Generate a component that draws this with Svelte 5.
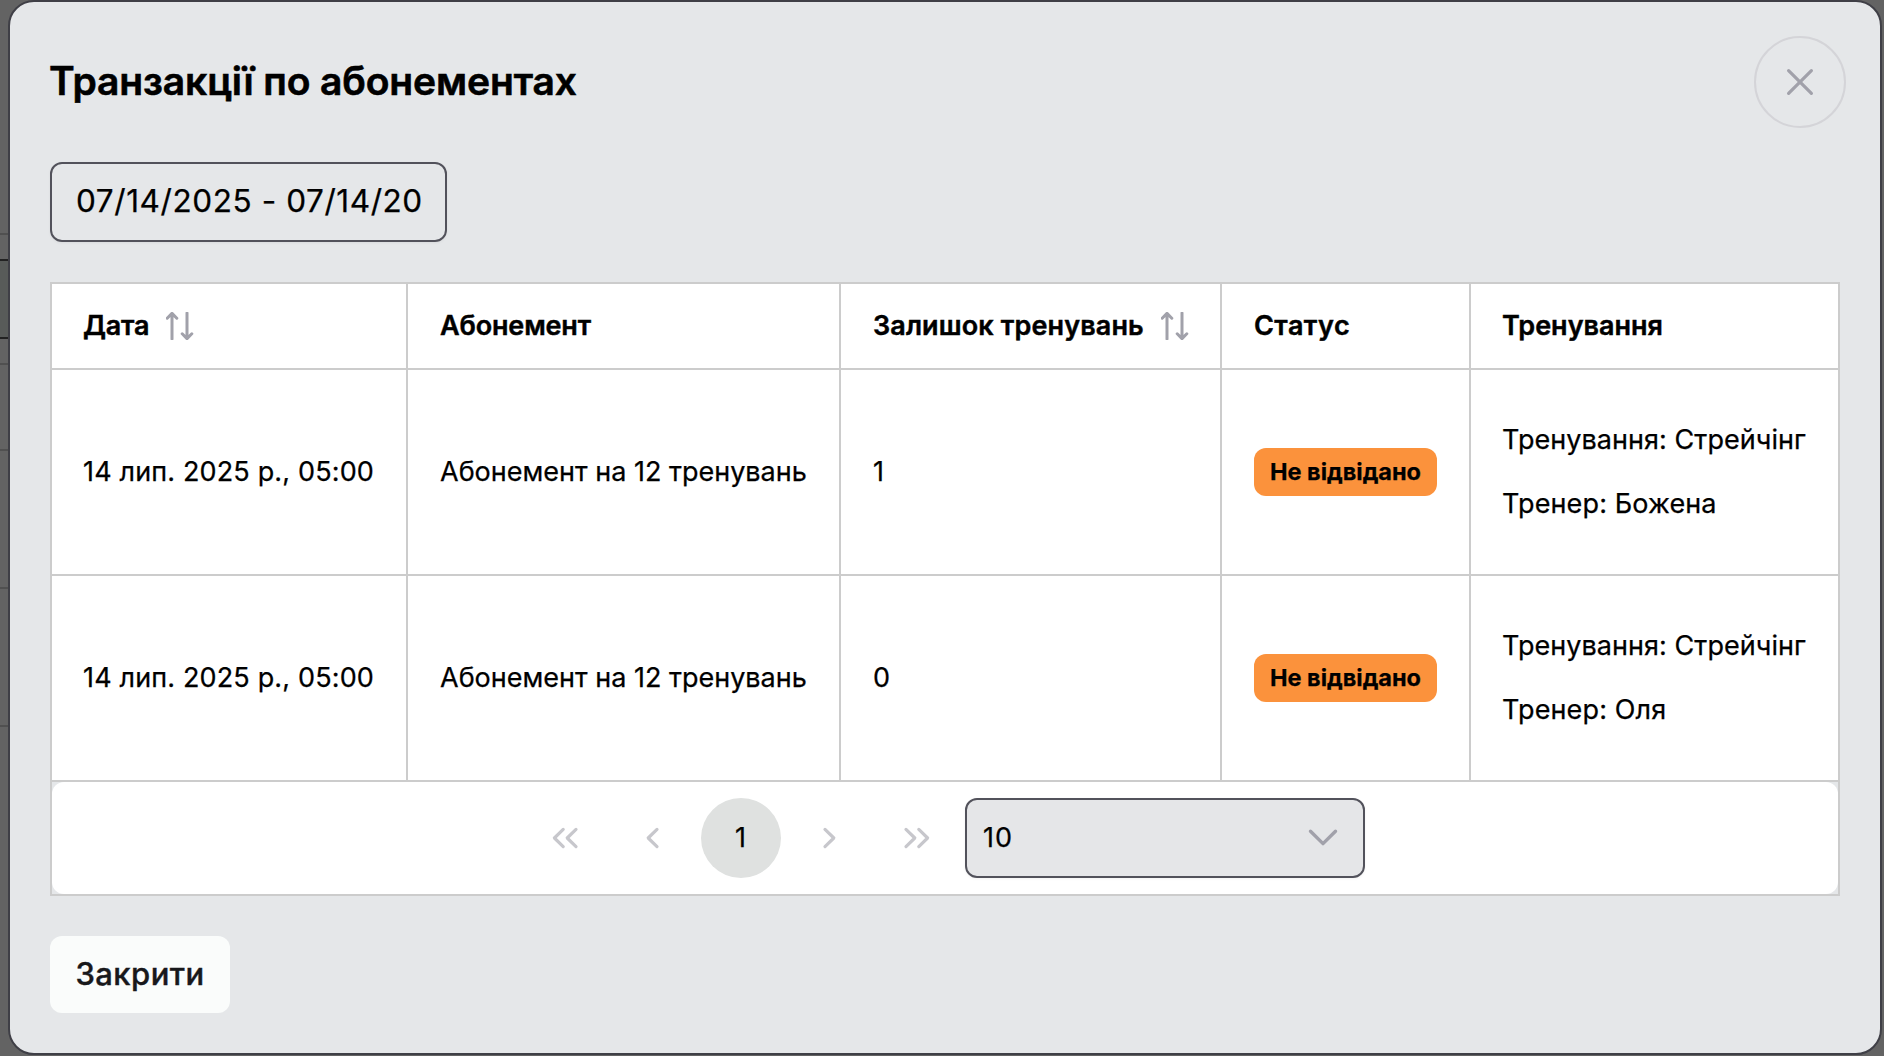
<script>
  const rows = [
    { date: '14 лип. 2025 р., 05:00', pass: 'Абонемент на 12 тренувань', left: 1, status: 'Не відвідано', training: 'Стрейчінг', coach: 'Божена' },
    { date: '14 лип. 2025 р., 05:00', pass: 'Абонемент на 12 тренувань', left: 0, status: 'Не відвідано', training: 'Стрейчінг', coach: 'Оля' }
  ];
</script>

{#snippet sortIcon()}
  <svg class="sort" width="28" height="28" viewBox="0 0 28 28">
    <path d="M6 27V1.4M1.2 6.2 6 1.4l4.8 4.8M21 1v25.6M16.2 21.8l4.8 4.8 4.8-4.8" />
  </svg>
{/snippet}

<div class="backdrop">
  <div class="behind">
    <i class="gap-top"></i><i class="gap-small"></i><i class="field"></i><i class="gap-bottom"></i>
    <i class="head"></i><i class="row"></i><i class="row"></i>
  </div>
  <section class="dialog">
    <header>
      <h1>Транзакції по абонементах</h1>
      <button class="close" aria-label="Закрити">
        <svg width="28" height="28" viewBox="0 0 28 28"><path d="M2.6 2.6l22.8 22.8M25.4 2.6L2.6 25.4" /></svg>
      </button>
    </header>

    <div class="range"><span>07/14/2025 - 07/14/20</span></div>

    <div class="table">
      <div class="tr thead">
        <div class="date">Дата {@render sortIcon()}</div>
        <div class="pass">Абонемент</div>
        <div class="rest">Залишок тренувань {@render sortIcon()}</div>
        <div class="status">Статус</div>
        <div>Тренування</div>
      </div>
      {#each rows as r}
        <div class="tr">
          <div class="date">{r.date}</div>
          <div>{r.pass}</div>
          <div>{r.left}</div>
          <div><span class="badge">{r.status}</span></div>
          <div class="info"><p>Тренування: {r.training}</p><p class="coach">Тренер: {r.coach}</p></div>
        </div>
      {/each}
      <div class="pager-wrap">
        <nav class="pager">
          <button aria-label="Перша"><svg width="28" height="28" viewBox="0 0 28 28"><path d="M12.2 5.4 3.4 14l8.8 8.6M25 5.4 16.2 14l8.8 8.6" /></svg></button>
          <button aria-label="Попередня"><svg width="28" height="28" viewBox="0 0 28 28"><path d="M18 5.4 9.2 14l8.8 8.6" /></svg></button>
          <button class="current">1</button>
          <button aria-label="Наступна"><svg width="28" height="28" viewBox="0 0 28 28"><path d="M10 5.4 18.8 14 10 22.6" /></svg></button>
          <button aria-label="Остання"><svg width="28" height="28" viewBox="0 0 28 28"><path d="M3 5.4 11.8 14 3 22.6M15.8 5.4l8.8 8.6-8.8 8.6" /></svg></button>
          <div class="select">
            <span>10</span>
            <svg width="30" height="20" viewBox="0 0 30 20"><path d="M2.5 3.2 15 15.6 27.5 3.2" /></svg>
          </div>
        </nav>
      </div>
    </div>

    <button class="done">Закрити</button>
  </section>
</div>

<style>
  :global(body) { background: #636363; }
  * { box-sizing: border-box; }
  h1, p { margin: 0; }
  button { font: inherit; border: 0; background: none; padding: 0; color: inherit; }
  svg { display: block; fill: none; stroke-linecap: round; stroke-linejoin: round; }

  .backdrop {
    display: flex;
    width: 1884px;
    height: 1056px;
    overflow: hidden;
    background: #636363;
    font-family: Inter, "Liberation Sans", sans-serif;
    font-size: 27px;
    font-weight: 400;
    color: #000;
    -webkit-text-stroke: .25px currentColor;
  }
  .behind { width: 8px; flex: none; display: flex; flex-direction: column; }
  .behind i { display: block; flex: none; border-bottom: 2px solid #505050; }
  .behind .gap-top { height: 235px; }
  .behind .gap-small { height: 26px; border-color: #222; }
  .behind .field { height: 78px; border-color: #222; background: #585b59; }
  .behind .gap-bottom { height: 26px; }
  .behind .head { height: 86px; }
  .behind .row { height: 138px; }

  .dialog {
    width: 1874px;
    height: 1055px;
    flex: none;
    padding: 34px 40px 0;
    border: 2px solid #3f3f46;
    border-radius: 26px;
    background: #e5e7e9;
  }
  header { display: flex; align-items: center; justify-content: space-between; height: 92px; margin-right: -6px; }
  h1 { font-size: 39px; font-weight: 600; letter-spacing: -.13px; line-height: 60px; padding-bottom: 3px; margin-left: -1px; -webkit-text-stroke-width: .6px; }
  .close {
    width: 92px;
    height: 92px;
    border: 2px solid #d4d4d8;
    border-radius: 50%;
    display: grid;
    place-items: center;
  }
  .close svg { stroke: #a1a1aa; stroke-width: 3.2; }

  .range {
    width: 397px;
    height: 80px;
    margin: 34px 0 40px;
    padding: 0 20px 3px 24px;
    border: 2px solid #52525b;
    border-radius: 12px;
    box-shadow: 0 1px 3px rgb(18 18 23 / 5%);
    font-size: 31.5px;
    line-height: 73px;
    letter-spacing: .58px;
    white-space: nowrap;
  }

  .table { width: 1790px; border: 2px solid #ccc; border-right-width: 0; border-bottom: 0; }
  .tr { display: grid; grid-template-columns: 356px 433px 381px 249px 369px; height: 206px; white-space: nowrap; }
  .tr > div {
    display: flex;
    align-items: center;
    padding: 0 0 2px 32px;
    background: #fff;
    border-right: 2px solid #ccc;
    border-bottom: 2px solid #ccc;
  }
  .tr > .date { padding-left: 31px; }
  .thead { height: 86px; font-weight: 600; -webkit-text-stroke-width: .45px; }
  .thead > div:last-child { padding-left: 31px; }
  .thead .pass { letter-spacing: -.15px; }
  .thead .rest { letter-spacing: .12px; }
  .thead .status { letter-spacing: .45px; }
  .date { letter-spacing: .15px; }
  .thead .date { letter-spacing: -.25px; }
  .sort { margin: 2px 0 0 17px; stroke: #a1a1aa; stroke-width: 3; }
  .tr .info { padding: 0 0 0 31px; flex-direction: column; align-items: flex-start; justify-content: center; line-height: 64px; letter-spacing: .05px; }
  .coach { letter-spacing: .12px; }
  .badge {
    height: 48px;
    width: 183px;
    margin-top: 2px;
    border-radius: 12px;
    background: #fb923c;
    text-align: center;
    font-size: 23.5px;
    font-weight: 700;
    line-height: 47px;
  }

  .pager-wrap { border-right: 2px solid #ccc; border-bottom: 2px solid #ccc; }
  .pager {
    height: 112px;
    display: flex;
    align-items: center;
    justify-content: center;
    gap: 8px;
    border-radius: 12px;
    background: #fff;
  }
  .pager button { width: 80px; height: 80px; display: grid; place-items: center; border-radius: 50%; }
  .pager button svg { stroke: #c7c7cc; stroke-width: 3.2; }
  .pager .current { background: #dfe1e0; padding: 0 1px 2px 0; }
  .select {
    width: 400px;
    height: 80px;
    padding: 0 25px 0 16px;
    display: flex;
    align-items: center;
    justify-content: space-between;
    border: 2px solid #52525b;
    border-radius: 12px;
    background: #e5e6e8;
    box-shadow: 0 1px 3px rgb(18 18 23 / 5%);
  }
  .select span { letter-spacing: 1px; padding-bottom: 2px; }
  .select svg { stroke: #a1a1aa; stroke-width: 3.4; }

  .done {
    width: 180px;
    height: 77px;
    margin-top: 40px;
    padding-bottom: 2px;
    border-radius: 12px;
    background: #fafcfb;
    color: #18181b;
    font-size: 31px;
    font-weight: 500;
    letter-spacing: .45px;
    -webkit-text-stroke-width: .4px;
  }
</style>
